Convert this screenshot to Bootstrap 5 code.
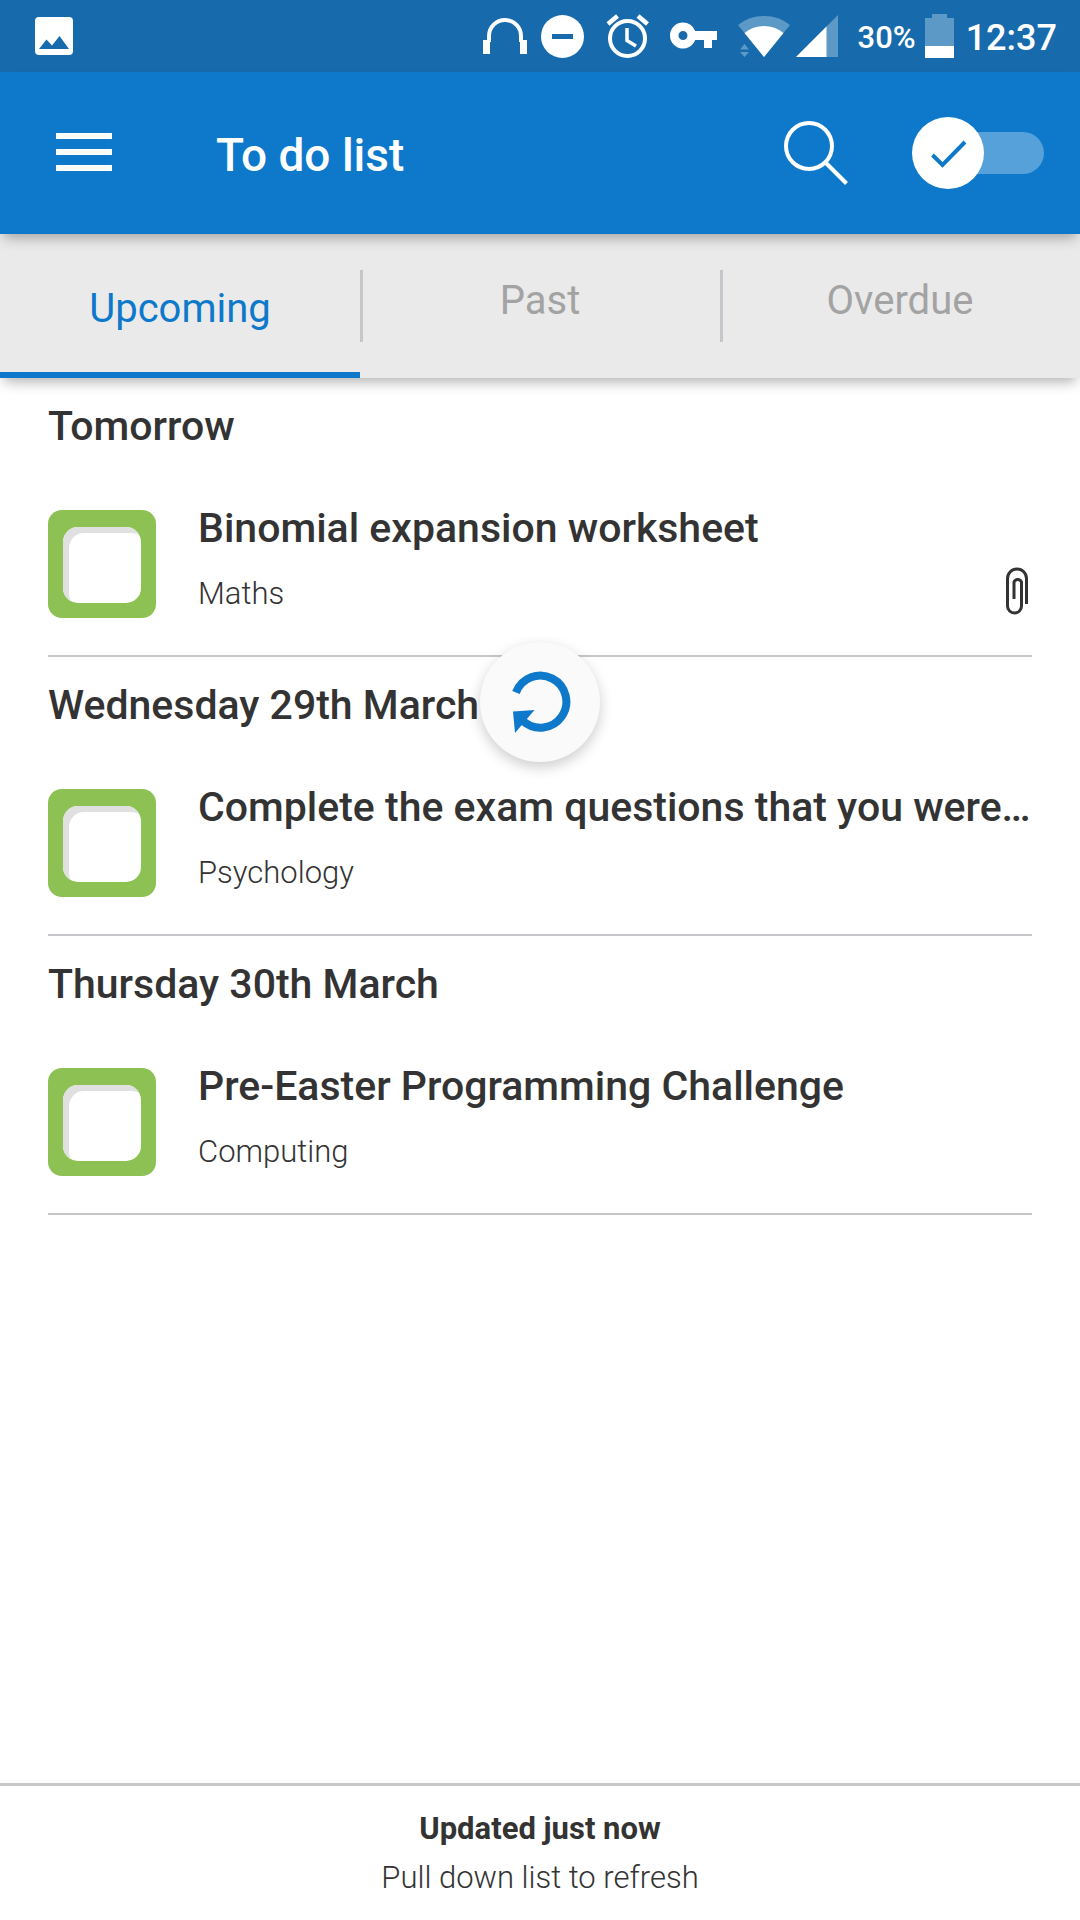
<!DOCTYPE html>
<html lang="en">
<head>
<meta charset="utf-8">
<meta name="viewport" content="width=device-width, initial-scale=1">
<title>To do list</title>
<link href="https://cdn.jsdelivr.net/npm/bootstrap@5.3.0/dist/css/bootstrap.min.css" rel="stylesheet">
<style>
  :root { --app-blue: #0e79cb; --app-line: #c7c7cb; --app-ink: #333; }
  body { font-family: Roboto, sans-serif; color: var(--app-ink); background: #fff; }
  svg { display: block; flex: none; }
  .medium { font-weight: 500; }

  .status-bar { height: 72px; padding: 0 23px 0 35px; background: #176bac; color: #fff; }
  .battery-text { font-size: 31px; line-height: 36px; margin: 0 9px 0 12px; padding-top: 3px; }
  .clock { font-size: 36px; line-height: 42px; margin-left: 12px; padding-top: 3px; }

  .app-bar { height: 162px; padding: 0 36px 0 56px; background: var(--app-blue); color: #fff; z-index: 3; }
  .drop-shade { box-shadow: 0 8px 12px -4px rgba(0, 0, 0, .3); position: relative; }
  .app-title { font-size: 46px; line-height: 52px; margin: 4px 0 0 104px; }
  .bare-btn { border: 0; background: none; padding: 0; color: inherit; }
  .done-switch { margin-left: 64px; cursor: pointer; }

  .tab-bar { height: 144px; background: #eaeaea; z-index: 2; }
  .tab-bar .nav-item + .nav-item { background: linear-gradient(var(--app-line), var(--app-line)) left center / 3px 72px no-repeat; }
  .tab-bar .nav-link { height: 100%; padding: 0 0 10px; border-radius: 0; color: #a3a3a3; font-size: 40px; line-height: 48px;
    display: flex; align-items: center; justify-content: center; }
  .tab-bar .nav-link.active { padding: 11px 0 0; color: var(--app-blue); border-bottom: 6px solid var(--app-blue); }

  .day-group { margin: 0 48px; border-bottom: 2px solid var(--app-line); padding-bottom: 37px; }
  .day-name { font-size: 41px; line-height: 48px; margin: 0; padding: 24px 0 60px; }
  .task-box { appearance: none; flex: none; width: 108px; height: 108px; margin: 0 42px 0 0; padding: 17px 15px 15px;
    border-radius: 14px; background: #8dc153; }
  .task-box::before { content: ""; display: block; height: 100%; border-radius: 15px; background: #fff;
    box-shadow: inset 6px 6px 0 #e0e0e0; }
  .task-box:checked::before { background: var(--app-blue); }
  .task-name { font-size: 41px; line-height: 48px; margin-top: -6px; }
  .task-subject { font-size: 31px; line-height: 36px; font-weight: 300; margin-top: 24px; }
  .clip-icon { margin-top: 15px; }

  .refresh-fab { position: absolute; left: 50%; top: 264px; translate: -50% 0; width: 120px; height: 120px;
    background: #fafafa; color: var(--app-blue); box-shadow: 0 5px 14px rgba(0, 0, 0, .2); }

  .sync-bar { border-top: 3px solid #c8c8ca; padding: 25px 0 24px; font-size: 31px; line-height: 36px; }
  .sync-hint { font-weight: 300; margin-top: 13px; }
</style>
</head>
<body>
<div class="d-flex flex-column min-vh-100">

  <div class="status-bar d-flex align-items-center">
    <svg width="38" height="38" viewBox="0 0 38 38" role="img" aria-label="Screenshot saved"><rect width="38" height="38" rx="4" fill="#fff"/><path d="M4 32 11.500 22.500 17 28.500 24.500 19 34 32Z" fill="#176bac"/></svg>
    <div class="d-flex align-items-center ms-auto">
      <svg width="56" height="72" viewBox="478 0 56 72" aria-hidden="true"><path d="M489 42V36a16 16 0 0 1 32 0v6" fill="none" stroke="#fff" stroke-width="4"/><path d="M483 40h7v14h-7zM520 40h7v14h-7z" fill="#fff"/></svg>
      <svg width="60" height="72" viewBox="534 0 60 72" aria-hidden="true"><circle cx="562.500" cy="36.500" r="21.500" fill="#fff"/><path d="M552 34h21v5h-21z" fill="#176bac"/></svg>
      <svg width="66" height="72" viewBox="594 0 66 72" aria-hidden="true" fill="none" stroke="#fff"><circle cx="627.500" cy="38.500" r="17.500" stroke-width="4"/><path d="M627 28v12.500l9 5.500" stroke-width="3.500"/><path d="M608 24l9.500-8M647.500 24l-9.500-8" stroke-width="4.500"/></svg>
      <svg width="68" height="72" viewBox="660 0 68 72" aria-hidden="true"><path fill="#fff" fill-rule="evenodd" d="M683 22.500a13 13 0 0 1 12.200 8.500H717v9h-5v8h-8v-8h-8.800A13 13 0 1 1 683 22.500Zm0 8.500a4.500 4.500 0 1 0 0 9a4.500 4.500 0 0 0 0-9Z"/></svg>
      <svg width="64" height="72" viewBox="728 0 64 72" aria-hidden="true"><path d="M764 57 738 25Q749 16 764 16T790 25Z" fill="#5d99c6"/><path d="M764 57 744.500 33Q753 26 764 26T783.500 33Z" fill="#fff"/><path d="M740 49.500 744.500 44 749 49.500ZM740 52 744.500 57 749 52Z" fill="#5d99c6"/></svg>
      <svg width="54" height="72" viewBox="792 0 54 72" aria-hidden="true"><path d="M796 57H838V15Z" fill="#5d99c6"/><path d="M796 57H826.500V26.500Z" fill="#fff"/></svg>
      <span class="battery-text medium">30%</span>
      <svg width="29" height="72" viewBox="925 0 29 72" aria-hidden="true"><path d="M925 18h7v-4h15v4h7v40h-29z" fill="#5d99c6"/><path d="M925 46h29v12h-29z" fill="#fff"/></svg>
      <span class="clock medium">12:37</span>
    </div>
  </div>

  <header class="app-bar drop-shade d-flex align-items-center">
    <button class="bare-btn" type="button" aria-label="Menu">
      <svg width="56" height="40" viewBox="0 0 56 40"><path d="M0 0h56v6H0zM0 16h56v6H0zM0 32h56v6H0z" fill="#fff"/></svg>
    </button>
    <h1 class="app-title medium">To do list</h1>
    <button class="bare-btn ms-auto" type="button" aria-label="Search">
      <svg width="64" height="64" viewBox="784 121 64 64" fill="none" stroke="#fff" stroke-width="4"><circle cx="809" cy="146" r="23"/><path d="M825.500 162.500 846.500 183.500"/></svg>
    </button>
    <div class="done-switch">
      <input class="visually-hidden" type="checkbox" role="switch" id="showDone">
      <label class="d-block" for="showDone" aria-label="Show completed">
        <svg width="132" height="72" viewBox="0 0 132 72"><rect x="30" y="15" width="102" height="42" rx="21" fill="#57a1da"/><circle cx="36" cy="36" r="36" fill="#fff"/><path d="M20.500 38 30.500 48 53 25" fill="none" stroke="#0e79cb" stroke-width="4"/></svg>
      </label>
    </div>
  </header>

  <ul class="tab-bar drop-shade nav nav-fill row g-0 flex-nowrap">
    <li class="nav-item col-4"><a class="nav-link active" href="#" aria-current="page">Upcoming</a></li>
    <li class="nav-item col-4"><a class="nav-link" href="#">Past</a></li>
    <li class="nav-item col-4"><a class="nav-link" href="#">Overdue</a></li>
  </ul>

  <main class="flex-grow-1 position-relative">
    <section class="day-group">
      <h2 class="day-name medium">Tomorrow</h2>
      <div class="task d-flex">
        <input class="task-box" type="checkbox" id="task1">
        <div class="flex-grow-1">
          <label class="task-name medium d-block text-nowrap" for="task1">Binomial expansion worksheet</label>
          <div class="d-flex justify-content-between">
            <div class="task-subject">Maths</div>
            <svg class="clip-icon" width="28" height="48" viewBox="1004 567 28 48" role="img" aria-label="Attachment" fill="none" stroke="#333" stroke-width="3"><path d="M1026.500 604V578.500a9.500 9.500 0 0 0-19 0V606a7 7 0 0 0 14 0V582a4 4 0 0 0-7.500 0V599"/></svg>
          </div>
        </div>
      </div>
    </section>
    <section class="day-group">
      <h2 class="day-name medium">Wednesday 29th March</h2>
      <div class="task d-flex">
        <input class="task-box" type="checkbox" id="task2">
        <div class="flex-grow-1">
          <label class="task-name medium d-block text-nowrap" for="task2">Complete the exam questions that you were…</label>
          <div class="task-subject">Psychology</div>
        </div>
      </div>
    </section>
    <section class="day-group">
      <h2 class="day-name medium">Thursday 30th March</h2>
      <div class="task d-flex">
        <input class="task-box" type="checkbox" id="task3">
        <div class="flex-grow-1">
          <label class="task-name medium d-block text-nowrap" for="task3">Pre-Easter Programming Challenge</label>
          <div class="task-subject">Computing</div>
        </div>
      </div>
    </section>
    <button class="refresh-fab bare-btn rounded-circle d-flex align-items-center justify-content-center" type="button" aria-label="Refresh">
      <svg width="64" height="64" viewBox="507 670 64 64"><path d="M515 692.500A26 26 0 1 1 522 721" fill="none" stroke="currentColor" stroke-width="8"/><path d="M512 711.500 533.500 710 514 733Z" fill="currentColor"/></svg>
    </button>
  </main>

  <footer class="sync-bar text-center">
    <div class="fw-bold">Updated just now</div>
    <div class="sync-hint">Pull down list to refresh</div>
  </footer>
</div>
<script src="https://cdn.jsdelivr.net/npm/bootstrap@5.3.0/dist/js/bootstrap.bundle.min.js"></script>
</body>
</html>
